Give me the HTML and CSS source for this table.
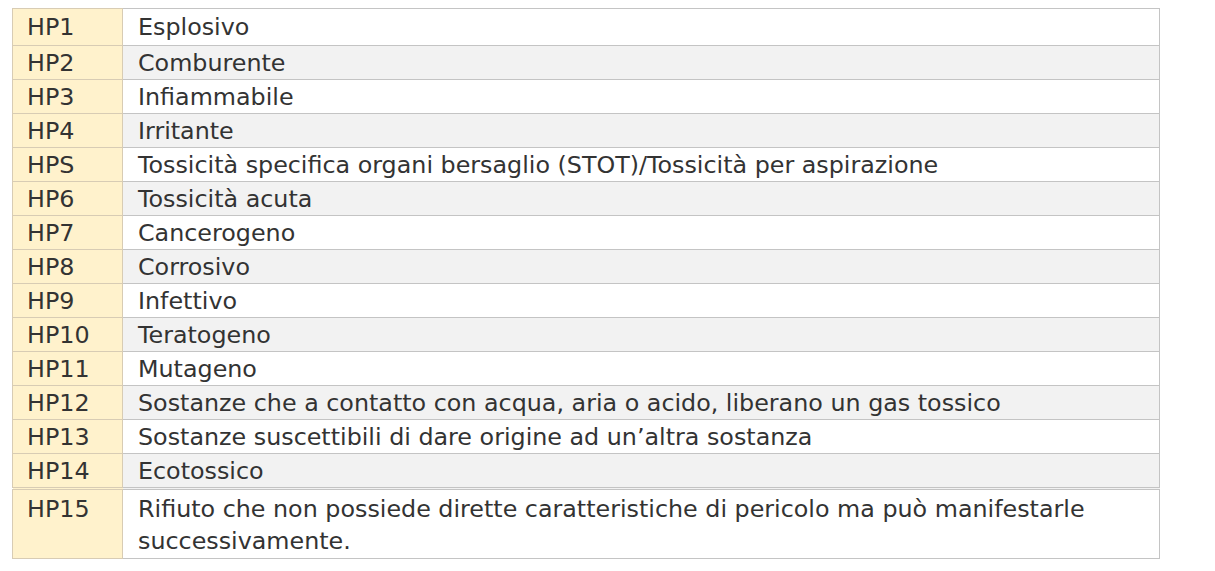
FILE: index.html
```html
<!DOCTYPE html>
<html lang="it">
<head>
<meta charset="utf-8">
<title>Caratteristiche di pericolo</title>
<link rel="stylesheet" href="styles.css">
</head>
<body>
<table class="hp-table">
  <tbody>
    <tr class="row first"><td class="code">HP1</td><td class="desc">Esplosivo</td></tr>
    <tr class="row alt"><td class="code">HP2</td><td class="desc">Comburente</td></tr>
    <tr class="row"><td class="code">HP3</td><td class="desc">Infiammabile</td></tr>
    <tr class="row alt"><td class="code">HP4</td><td class="desc">Irritante</td></tr>
    <tr class="row"><td class="code">HPS</td><td class="desc">Tossicità specifica organi bersaglio (STOT)/Tossicità per aspirazione</td></tr>
    <tr class="row alt"><td class="code">HP6</td><td class="desc">Tossicità acuta</td></tr>
    <tr class="row"><td class="code">HP7</td><td class="desc">Cancerogeno</td></tr>
    <tr class="row alt"><td class="code">HP8</td><td class="desc">Corrosivo</td></tr>
    <tr class="row"><td class="code">HP9</td><td class="desc">Infettivo</td></tr>
    <tr class="row alt"><td class="code">HP10</td><td class="desc">Teratogeno</td></tr>
    <tr class="row"><td class="code">HP11</td><td class="desc">Mutageno</td></tr>
    <tr class="row alt"><td class="code">HP12</td><td class="desc">Sostanze che a contatto con acqua, aria o acido, liberano un gas tossico</td></tr>
    <tr class="row"><td class="code">HP13</td><td class="desc">Sostanze suscettibili di dare origine ad un’altra sostanza</td></tr>
    <tr class="row alt"><td class="code">HP14</td><td class="desc">Ecotossico</td></tr>
    <tr class="row last"><td class="code">HP15</td><td class="desc">Rifiuto che non possiede dirette caratteristiche di pericolo ma può manifestarle successivamente.</td></tr>
  </tbody>
</table>
</body>
</html>
```

FILE: styles.css
```css
html, body {
  margin: 0;
  padding: 0;
  background: #ffffff;
}

body {
  padding: 8px 0 0 12px;
  font-family: "DejaVu Sans", sans-serif;
  font-size: 23.8px;
  color: #333333;
}

.hp-table {
  width: 1148px;
  border-collapse: collapse;
  table-layout: fixed;
}

.hp-table td {
  border: 1px solid #c4c4c4;
  height: 33px;
  padding: 0;
  line-height: 32px;
  vertical-align: middle;
  white-space: nowrap;
}

.hp-table .code {
  width: 95px;
  padding-left: 14px;
  background: #fff2cc;
  border-color: #d8ccb4;
}

.hp-table .desc {
  padding-left: 15px;
  background: #ffffff;
}

.row.alt .desc {
  background: #f2f2f2;
}

.row.first td {
  height: 36px;
}

.row.last td {
  border-top: 3px double #c4c4c4;
  height: 65px;
  vertical-align: top;
  padding-top: 3px;
  white-space: normal;
}

.row.last .desc {
  padding-right: 40px;
}

.row.last .code {
  border-top-color: #d8ccb4;
}
```
